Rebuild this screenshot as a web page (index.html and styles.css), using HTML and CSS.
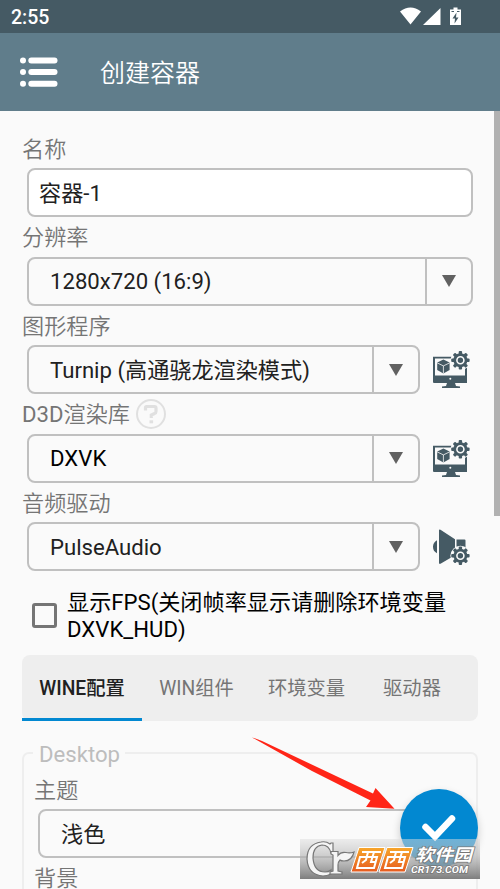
FILE: index.html
```html
<!DOCTYPE html>
<html lang="zh-CN">
<head>
<meta charset="utf-8">
<title>创建容器</title>
<link rel="stylesheet" href="styles.css">
</head>
<body>
<svg class="defs" aria-hidden="true">
  <defs>
    <g id="gear">
      <g fill="currentColor">
        <circle r="7"/>
        <g id="teeth"><rect x="-1.7" y="-9.200" width="3.4" height="18.400" rx="1"/><rect x="-9.200" y="-1.7" width="18.400" height="3.4" rx="1"/></g>
        <use href="#teeth" transform="rotate(45)"/>
      </g>
      <circle r="3.500" fill="none" stroke="#fafafa" stroke-width="1.600"/>
    </g>
    <g id="display">
      <path d="M3 7.700h34V34H25l1 3 4 .5v1.500H12v-1.500l4-.5 1-3H4q-1 0-1-1z" fill="currentColor"/>
      <path d="M5 9.500h30v17H5z" fill="#fafafa"/>
      <path d="M13.400 10.500l6.200 3v7.500l-6.200 3.500L7.200 21v-7.500z" fill="currentColor"/>
      <path d="M7.200 13.900l6.200 3 6.200-3M13.400 16.900v7.500" stroke="#fafafa" stroke-width=".8" fill="none"/>
      <circle cx="20.300" cy="29.700" r="1" fill="#fafafa"/>
      <circle cx="30.400" cy="11.300" r="10" fill="#fafafa"/>
      <use href="#gear" x="30.400" y="11.300"/>
    </g>
  </defs>
</svg>
<div class="screen">
  <header>
    <div class="status">
      <span>2:55</span>
      <svg width="62" height="20" viewBox="0 0 62 20" fill="#fff">
        <path d="M0 4.500Q10.500-3.500 21 4.500L10.500 17.500zM40.500 1V18H23z"/>
        <path d="M50 2.500h3.500V.5h4v2H61V18H50z"/>
        <path d="M51.500 4.500h2.500M57 4.500h2.500" stroke="#455a64"/>
        <path d="M56.500 5.500l-4 6h2.500l-.5 5 4-6H56z" fill="#455a64"/>
      </svg>
    </div>
    <div class="toolbar">
      <svg width="38" height="30" viewBox="0 0 38 30" fill="#fff">
        <circle cx="3" cy="3.500" r="3"/><rect x="8.300" y=".5" width="29.200" height="6" rx="3"/>
        <circle cx="3" cy="15" r="3"/><rect x="8.300" y="12" width="29.200" height="6" rx="3"/>
        <circle cx="3" cy="26.700" r="3"/><rect x="8.300" y="23.700" width="29.200" height="6" rx="3"/>
      </svg>
      <h1>创建容器</h1>
    </div>
  </header>
  <main>
    <div class="label">名称</div>
    <div class="row"><div class="box input">容器-1</div></div>
    <div class="label">分辨率</div>
    <div class="row"><div class="box select"><span>1280x720 (16:9)</span><i></i></div></div>
    <div class="label">图形程序</div>
    <div class="row">
      <div class="box select"><span>Turnip (高通骁龙渲染模式)</span><i></i></div>
      <svg class="action" viewBox="0 0 40 40"><use href="#display"/></svg>
    </div>
    <div class="label"><span><span class="latin">D3D</span>渲染库</span>
      <svg class="help" viewBox="0 0 30 30" fill="none" stroke="#e0e0e0"><circle cx="15" cy="15" r="14" stroke-width="2"/><path d="M9.500 11.500V8.500Q9.500 7.500 10.500 7.500H18.500Q20 7.500 20 9V12.500Q20 14 18.500 14.500L15.300 16V19" stroke-width="3.200"/><path d="M13.500 21.300h3.600v3h-3.600z" fill="#e0e0e0" stroke="none"/></svg>
    </div>
    <div class="row">
      <div class="box select black"><span>DXVK</span><i></i></div>
      <svg class="action" viewBox="0 0 40 40"><use href="#display"/></svg>
    </div>
    <div class="label">音频驱动</div>
    <div class="row">
      <div class="box select"><span>PulseAudio</span><i></i></div>
      <svg class="action" viewBox="0 0 40 40">
        <path d="M7 14.200v13Q3 25.200 3 20.700t4-6.500zM9 4.200q0-1 1.500-.5L25 13.200v16L10.500 37.700Q9 38.200 9 37.200zM26.500 13.500h8q1 0 1 1v12h-9z" fill="currentColor"/>
        <circle cx="30.400" cy="29.700" r="10" fill="#fafafa"/>
        <use href="#gear" x="30.400" y="29.700"/>
      </svg>
    </div>
    <div class="check"><b></b><p>显示FPS(关闭帧率显示请删除环境变量DXVK_HUD)</p></div>
    <nav><span class="active">WINE配置</span><span>WIN组件</span><span>环境变量</span><span>驱动器</span></nav>
    <section class="group">
      <div class="legend">Desktop</div>
      <div class="label">主题</div>
      <div class="row"><div class="box select"><span>浅色</span><i></i></div></div>
      <div class="label">背景</div>
    </section>
  </main>
  <div class="scrollbar"></div>
  <div class="fab"><svg viewBox="0 0 78 78"><path d="M25.500 38l9.500 9.500L52 29.500" fill="none" stroke="#fff" stroke-width="6.500" stroke-linecap="round"/></svg></div>
  <svg class="arrow" viewBox="0 0 145 75"><path d="M0 .5Q3 1 10 4L121 56.500l2.500-5.500L142.500 71.700 114 70l4.500-6.500L60 34z" fill="#ff2517"/></svg>
  <svg class="mark" viewBox="0 0 180 40">
    <defs>
      <linearGradient id="shade" x2="0" y2="1"><stop stop-color="#ddd" stop-opacity=".5"/><stop offset=".4" stop-color="#b8b8b8" stop-opacity=".65"/><stop offset="1" stop-color="#777" stop-opacity=".95"/></linearGradient>
      <linearGradient id="orange" x2="0" y2="1"><stop stop-color="#f7a72c"/><stop offset="1" stop-color="#e65b20"/></linearGradient>
    </defs>
    <rect width="180" height="40" fill="url(#shade)"/>
    <g stroke="#777" stroke-width="1.200" fill="#f5f5f5">
      <path fill-rule="evenodd" d="M33 4v10h-2Q29 6 22 6q-9 1-9 13 1 14 12 14 4 0 6-2v4q-4 2-8 2Q8 36 7 20 7 5 21 3q5-1 9 2l1-1z"/>
      <path d="M31 12.500h7v4q3-4 8-3 4 1 8-.5-2 9-10 9-3 0-4-1-2 2-2 5v6l4 1v2H30v-2l3-1V16l-2-1z"/>
    </g>
    <g fill="url(#orange)" stroke="#fff" stroke-width="1"><path d="M59 8.500h26l-8 24.500H51zM87 8.500h26l-8 24.500H79z"/></g>
    <g fill="none" stroke="#fff" stroke-width="2"><path d="M62 13h19M60 18h17l-3 11H57zM68 13l-2 8-4 3M74 13l-3 10h4M90 13h19M88 18h17l-3 11H85zM96 13l-2 8-4 3M102 13l-3 10h4"/></g>
    <text class="mark-name" x="115" y="22" textLength="57" lengthAdjust="spacingAndGlyphs">软件园</text>
    <text class="mark-site" x="111" y="34" textLength="57" lengthAdjust="spacingAndGlyphs">CR173.COM</text>
  </svg>
</div>
</body>
</html>
```
FILE: styles.css
```css
* { box-sizing: border-box; }
body { margin: 0; font-family: Roboto, "Noto Sans CJK SC", sans-serif; font-size: 22.15px; color: #212121; }
.defs { position: absolute; width: 0; height: 0; }
.screen { position: relative; width: 500px; height: 889px; overflow: hidden; background: #fafafa; }
.status { height: 33px; padding: 1px 38px 0 11px; display: flex; align-items: center; justify-content: space-between; background: #455a64; color: #fff; font-size: 19.5px; font-weight: 500; }
.toolbar { height: 78px; padding-left: 20px; display: flex; align-items: center; gap: 42px; background: #607d8b; color: #fff; }
.toolbar h1 { margin: 0; padding-top: 3px; font-size: 25px; font-weight: 350; line-height: 30px; }
main { padding: 17.5px 22px 0; }
.label { height: 39.5px; padding-top: 1px; display: flex; align-items: center; gap: 6px; color: #757575; font-weight: 350; line-height: 30px; }
.latin { font-weight: 400; }
.help { width: 30px; height: 30px; }
.row { height: 49px; padding: 0 5px; display: flex; gap: 10px; }
.box { flex: 1; height: 49px; border: 2px solid #c0c0c0; border-radius: 8px; display: flex; align-items: center; line-height: 30px; white-space: nowrap; }
.input { padding-left: 10px; background: #fff; }
.select { padding-left: 21px; justify-content: space-between; }
.select i { width: 46px; height: 100%; border-left: 2px solid #c0c0c0; display: flex; align-items: center; justify-content: center; }
.select i::before { content: ""; border: 7.5px solid transparent; border-top: 12px solid #616161; border-bottom: 0; }
.black, .check { color: #000; }
.action { width: 40px; height: 40px; margin: 4px 1px 0 0; color: #455a64; }
.row:has(.action) { padding-right: 7px; }
.check { height: 84px; padding: 5px 20px 0 10px; display: flex; align-items: center; gap: 10px; }
.check b { flex: none; width: 25px; height: 25px; border: 3px solid #757575; border-radius: 3px; }
.check p { margin: 0; line-height: 26.5px; }
nav { height: 66px; display: flex; border-radius: 8px; background: #eee; color: #757575; font-size: 19.3px; line-height: 68px; text-align: center; }
nav span { width: 109px; height: 66px; }
nav span:nth-child(3) { width: 111px; }
nav span:nth-child(4) { width: 100px; }
nav .active { width: 120px; color: #212121; font-weight: 500; border-bottom: 3px solid #0288d1; }
.group { height: 170px; margin-top: 31px; padding: 0 11px; border: 2px solid #eee; border-radius: 7px; }
.legend { width: 92px; height: 30px; margin: -15px 0 1px -2px; padding-left: 6px; background: #fafafa; color: #bdbdbd; line-height: 30px; }
.group .label { height: 39px; margin-left: -1px; }
.group .row { padding: 0 3px; }
.scrollbar { position: absolute; top: 111px; right: 0; width: 6px; height: 405px; background: #b1b1b1; }
.fab { position: absolute; left: 400px; top: 789px; width: 78px; height: 78px; border-radius: 50%; background: #0288d1; box-shadow: 0 4px 9px #0003; }
.arrow { position: absolute; left: 252px; top: 737px; width: 145px; height: 75px; }
.mark { position: absolute; left: 300px; top: 839px; width: 180px; height: 40px; }
.mark text { fill: #fff; stroke: #777; stroke-width: 1.5px; paint-order: stroke; font-style: italic; font-weight: 700; }
.mark-name { font-size: 17px; }
.mark-site { font-size: 9.5px; }
```
